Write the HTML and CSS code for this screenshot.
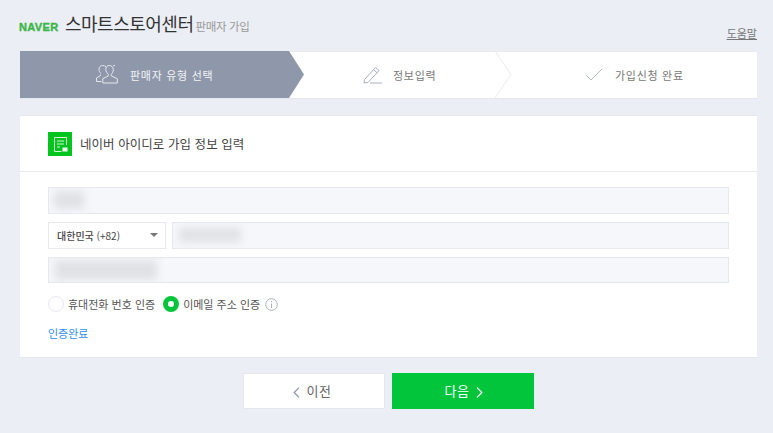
FILE: index.html
```html
<!DOCTYPE html>
<html lang="ko">
<head>
<meta charset="utf-8">
<title>스마트스토어센터 판매자 가입</title>
<link rel="stylesheet" href="styles.css">
</head>
<body>
<div class="page">
  <header class="top">
    <div class="brand">
      <span class="naver">NAVER</span>
      <span class="title">스마트스토어센터</span>
      <span class="sub">판매자 가입</span>
    </div>
    <a class="help">도움말</a>
  </header>

  <ol class="steps">
    <li class="step step-on">
      <svg class="ic-people" width="25" height="21" viewBox="0 0 25 21" fill="none" stroke="#e4e7ee" stroke-width="1">
        <path d="M6 9.500c-1.300-1-2-2.700-2-4.300C4 2.800 5.800 1.500 7.800 1.500c1.300 0 2.400.5 3.200 1.400M5.500 10.500v1L1.500 14v3.500h5"/>
        <path d="M13.500 1.500c2.300 0 4 1.700 4 4.200 0 1.700-.8 3.400-2 4.500v1.700l6 2.800v4.300H7v-4.300l5.500-2.800v-1.700c-1.200-1.100-2.500-2.800-2.500-4.500 0-2.500 1.200-4.200 3.500-4.200z" transform="translate(.8 0)"/>
        <path d="M18 2c.6-.4 1.300-.5 2-.5"/>
      </svg>
      <span>판매자 유형 선택</span>
    </li>
    <li class="step step-two">
      <svg width="19" height="18" viewBox="0 0 19 18" fill="none" stroke="#a9afbd" stroke-width="1">
        <path d="M1.500 13.500 12.500 1.500l3.500 3L5 16.500l-4 .5z"/>
        <path d="M10.500 3.700l3.500 3M7 17h12"/>
      </svg>
      <span>정보입력</span>
    </li>
    <li class="step step-three">
      <svg width="18" height="13" viewBox="0 0 18 13" fill="none" stroke="#b4b9c6" stroke-width="1">
        <path d="M1 7l5 5L17 1"/>
      </svg>
      <span>가입신청 완료</span>
    </li>
    <svg class="arrow-on" width="16" height="47" viewBox="0 0 16 47"><path d="M0 0l15 23.500L0 47z" fill="#8f98aa"/></svg>
    <svg class="arrow-off" width="17" height="47" viewBox="0 0 17 47" fill="none" stroke="#e9ebf0"><path d="M0 0l16 23.500L0 47"/></svg>
  </ol>

  <section class="card">
    <div class="card-head">
      <svg class="ic-form" width="24" height="24" viewBox="0 0 24 24">
        <rect width="24" height="24" fill="#03c51e"/>
        <g fill="none" stroke="#d5f5d9" stroke-width="1">
          <path d="M18.500 13V5.500h-12v14h7"/>
          <path d="M9 9h7M9 12h7M9 15h3"/>
        </g>
        <rect x="14.500" y="15.500" width="5" height="4" fill="#fff"/>
      </svg>
      <h2>네이버 아이디로 가입 정보 입력</h2>
    </div>
    <div class="card-body">
      <div class="field field-a"><i class="smudge smudge-a"></i></div>
      <div class="phone">
        <div class="select">
          <span class="country"><b>대한민국</b> (+82)</span>
          <i class="caret"></i>
        </div>
        <div class="field field-b"><i class="smudge smudge-b"></i></div>
      </div>
      <div class="field field-c"><i class="smudge smudge-c"></i></div>
      <div class="radios">
        <label class="radio"><i class="dot"></i>휴대전화 번호 인증</label>
        <label class="radio"><i class="dot dot-on"></i>이메일 주소 인증</label>
        <svg class="ic-info" width="13" height="13" viewBox="0 0 13 13" fill="none" stroke="#aab0bd">
          <circle cx="6.500" cy="6.500" r="5.800"/>
          <path d="M6.500 5.500v4.500M6.500 3v1.200"/>
        </svg>
      </div>
      <p class="done">인증완료</p>
    </div>
  </section>

  <div class="actions">
    <button class="btn btn-prev">
      <svg class="chev" width="7" height="11" viewBox="0 0 7 11" fill="none" stroke="#8f98aa" stroke-width="1.300"><path d="M6 .6 1.200 5.500 6 10.400"/></svg>
      <span class="lbl">이전</span>
    </button>
    <button class="btn btn-next">
      <span class="lbl">다음</span>
      <svg class="chev" width="7" height="11" viewBox="0 0 7 11" fill="none" stroke="#fff" stroke-width="1.300"><path d="M1 .6l4.800 4.900L1 10.400"/></svg>
    </button>
  </div>
</div>
</body>
</html>
```

FILE: styles.css
```css
* { box-sizing: border-box; }
html, body { margin: 0; padding: 0; }
body {
  background: #ebeef4;
  font-family: "Noto Sans CJK KR", "Noto Sans", sans-serif;
  color: #555;
  height: 433px;
  overflow: hidden;
}
.page { width: 737px; margin-left: 20px; }

.top {
  height: 51px;
  display: flex;
  justify-content: space-between;
  align-items: flex-end;
  padding-bottom: 11px;
}
.brand {
  display: flex;
  align-items: baseline;
  margin-left: -1px;
  position: relative;
  top: -5px;
}
.naver {
  font-family: "Liberation Sans", sans-serif;
  font-weight: 700;
  font-size: 11px;
  letter-spacing: .35px;
  color: #3cb648;
  -webkit-text-stroke: .4px #3cb648;
  width: 46px;
}
.title { font-size: 18px; line-height: 24px; color: #333; letter-spacing: -.5px; }
.sub { font-size: 11.500px; color: #999; margin-left: 2px; letter-spacing: -.35px; }
.help { font-size: 11px; line-height: 14px; color: #777; text-decoration: underline; }

.steps {
  list-style: none;
  margin: 0;
  padding: 0;
  height: 48px;
  background: #fff;
  border-bottom: 1px solid #e4e7ee;
  box-shadow: inset 0 1px 0 #e9ebf2;
  display: grid;
  grid-template-columns: 269px 206px 1fr;
  position: relative;
}
.step {
  display: flex;
  align-items: center;
  font-size: 11px;
  letter-spacing: .7px;
  color: #777;
}
.step svg { flex: none; }
.step-on { background: #8f98aa; color: #f2f3f6; padding-left: 75px; gap: 10px; }
.step-two { padding-left: 74px; gap: 11px; }
.step-three { padding-left: 90px; gap: 12px; }
.arrow-on, .arrow-off { position: absolute; top: 0; }
.arrow-on { left: 269px; }
.arrow-off { left: 475px; }

.card {
  margin-top: 16px;
  height: 243px;
  background: #fff;
  border: 1px solid #e4e7ee;
  border-width: 1px 0 1px 0;
}
.card-head {
  height: 56px;
  border-bottom: 1px solid #e8eaf0;
  display: flex;
  align-items: center;
  padding-left: 28px;
  gap: 8px;
}
.card-head h2 { margin: 0; font-size: 12.500px; font-weight: 400; color: #444; letter-spacing: .05px; }
.card-body { padding: 15px 28px 0; }
.field {
  height: 26.500px;
  background: #f6f7fb;
  border: 1px solid #e6e8ef;
  display: flex;
  align-items: center;
  overflow: hidden;
}
.field-c { margin-top: 8px; }
.smudge { display: block; background: #dfe1e5; filter: blur(4.500px); }
.smudge-a { width: 30px; height: 18px; margin-left: 5px; }
.smudge-b { width: 62px; height: 14px; margin-left: 6px; }
.smudge-c { width: 102px; height: 20px; margin-left: 6px; }
.phone { display: flex; gap: 6px; margin-top: 8px; }
.select {
  width: 118px;
  height: 27px;
  background: #fff;
  border: 1px solid #e6e8ef;
  display: flex;
  align-items: center;
  justify-content: space-between;
  padding: 0 7px 0 8px;
  font-size: 10px;
  color: #444;
}
.country b { font-weight: 500; }
.caret {
  width: 0; height: 0;
  border: 4px solid transparent;
  border-top: 4px solid #777;
  border-bottom: 0;
}
.field-b { flex: 1; height: 27px; }
.radios {
  display: flex;
  align-items: center;
  margin-top: 12px;
  height: 18px;
  font-size: 11px;
  color: #555;
}
.radio { display: flex; align-items: center; gap: 4px; margin-right: 8px; }
.dot {
  width: 16px; height: 16px;
  border-radius: 50%;
  background: #fff;
  border: 1px solid #e6e8ef;
}
.dot-on { border: 5px solid #03c53c; }
.ic-info { margin-left: -3px; }
.done { margin: 12px 0 0; font-size: 11px; line-height: 16px; color: #2f8fe8; }

.actions { display: flex; justify-content: center; gap: 7px; margin-top: 15px; margin-left: -1px; }
.btn {
  width: 142px;
  height: 36px;
  display: flex;
  align-items: center;
  justify-content: center;
  gap: 7px;
  font-family: inherit;
  font-size: 13px;
  letter-spacing: .5px;
  padding: 0;
}
.lbl { margin-top: -1px; }
.chev { margin-top: 2px; }
.btn-prev { background: #fff; border: 1px solid #e4e7ee; color: #666; padding-right: 3px; }
.btn-next { background: #03c53c; border: 1px solid #03c53c; color: #fff; padding-left: 3px; }
```
